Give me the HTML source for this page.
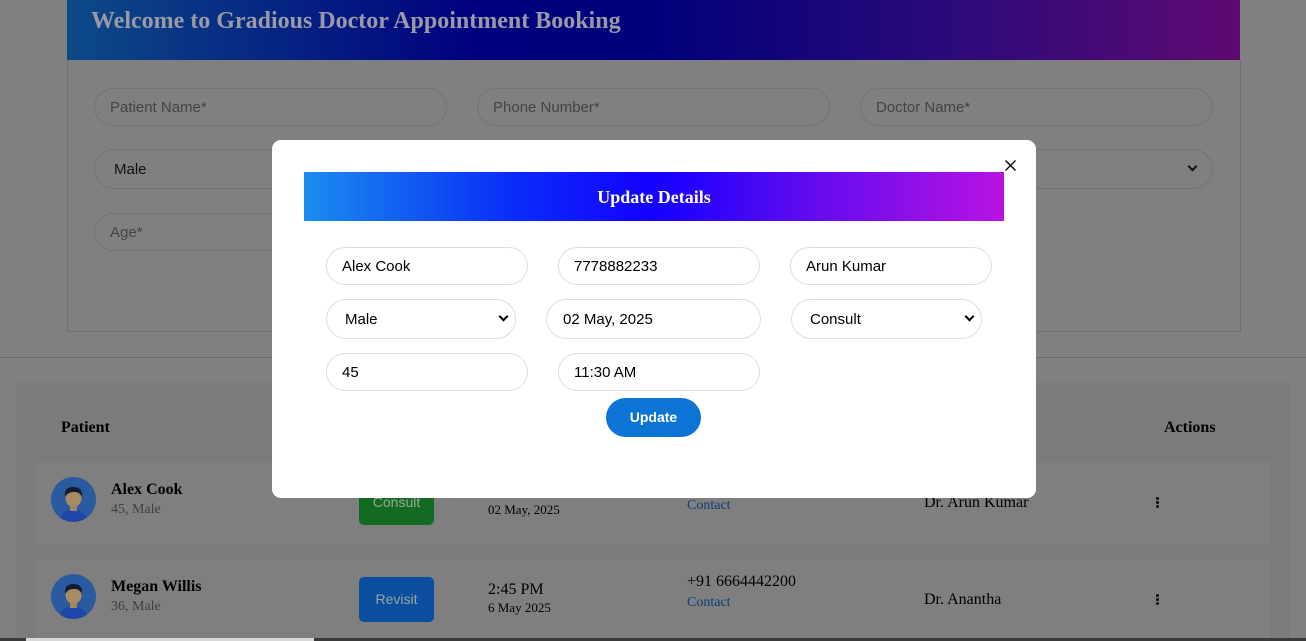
<!DOCTYPE html>
<html><head><meta charset="utf-8"><style>
*{box-sizing:border-box;margin:0;padding:0}
body{width:1306px;height:641px;overflow:hidden;background:#808080;position:relative;font-family:"Liberation Serif",serif}
.abs{position:absolute}
.hdr{left:67px;top:0;width:1173px;height:60px;background:linear-gradient(90deg,#0c4a86,#00007f 35%,#00007a 50%,#2a0a7a 75%,#5e0a72);}
.hdr h1{position:absolute;left:24px;top:8px;font-size:24px;color:#9a9aa6;font-weight:bold}
.form{left:67px;top:60px;width:1174px;height:272px;border:1px solid #707070;border-top:none}
.fi{position:absolute;height:38px;border:1px solid #737373;border-radius:20px;font:15px "Liberation Sans",sans-serif;color:#444;padding:10px 15px}
.line{left:0;top:357px;width:1306px;height:1px;background:#6a6a6a}
.tbl{left:16px;top:383px;width:1274px;height:258px;background:#7b7b7b}
.row{position:absolute;left:36px;width:1234px;height:82px;background:#7f7f7f}
.th{font-size:16px;font-weight:bold;color:#000}
.av{position:absolute;left:15px;width:45px;height:45px;border-radius:50%;background:#2a5aa0;overflow:hidden}
.nm{position:absolute;left:75px;font-size:16px;font-weight:bold;color:#000}
.sb{position:absolute;left:75px;font-size:14px;color:#404040}
.btn{position:absolute;left:323px;width:75px;height:45px;border-radius:5px;color:#9aa89a;font:14px "Liberation Sans",sans-serif;text-align:center;line-height:45px}
.t{position:absolute;color:#000}
.ct{color:#0c3e78;font-size:14px}
.dots{position:absolute;left:1120px;width:3px}
.dots i{display:block;width:3px;height:3px;background:#000;border-radius:50%;margin-bottom:1px}
.modal{left:272px;top:140px;width:764px;height:358px;background:#fff;border-radius:9px}
.mh{position:absolute;left:32px;top:32px;width:700px;height:49px;background:linear-gradient(90deg,#1a8ced,#0a2cf8 30%,#1400ff 50%,#6a0cee 75%,#b812e2);color:#fff;font-size:18px;font-weight:bold;text-align:center;line-height:50px}
.mi{position:absolute;height:38px;border:1px solid #ddd;border-radius:20px;font:15px "Liberation Sans",sans-serif;color:#000;padding:10px 15px}
.ms{height:40px;padding:11px 18px}
.chev{position:absolute;right:8px;top:13px;width:7px;height:7px;border-right:2px solid #000;border-bottom:2px solid #000;transform:rotate(45deg)}
.up{position:absolute;left:334px;top:258px;width:95px;height:39px;border-radius:20px;background:#0b74d4;color:#fff;font:bold 14px "Liberation Sans",sans-serif;text-align:center;line-height:39px}
.x{position:absolute;left:733px;top:20px}
</style></head><body>
<div class="abs hdr"><h1>Welcome to Gradious Doctor Appointment Booking</h1></div>
<div class="abs form"></div>
<div class="fi" style="left:94px;top:88px;width:353px">Patient Name*</div>
<div class="fi" style="left:477px;top:88px;width:353px">Phone Number*</div>
<div class="fi" style="left:860px;top:88px;width:353px">Doctor Name*</div>
<div class="fi" style="left:94px;top:149px;width:353px;height:40px;color:#111;padding-left:19px;padding-top:11px">Male</div>
<div class="fi" style="left:860px;top:149px;width:353px;height:40px"><span class="chev" style="right:16px;border-color:#111"></span></div>
<div class="fi" style="left:94px;top:213px;width:353px">Age*</div>
<div class="abs line"></div>
<div class="abs tbl"></div>
<div class="abs th" style="left:61px;top:419px">Patient</div>
<div class="abs th" style="left:1164px;top:419px">Actions</div>

<div class="row" style="top:462px">
 <div class="av" style="top:15px"><svg width="45" height="45"><path d="M8 45 Q10 33 22 32 Q35 33 37 45Z" fill="#1c47a8"/><rect x="19" y="27" width="7" height="7" fill="#a4855e"/><ellipse cx="22.5" cy="21" rx="8" ry="9" fill="#a88a63"/><path d="M14 20 Q13 10 22 10 Q32 10 31 20 Q28 14 22 15 Q17 15 14 20Z" fill="#141a30"/></svg></div>
 <div class="nm" style="top:19px">Alex Cook</div><div class="sb" style="top:40px">45, Male</div>
 <div class="btn" style="top:18px;background:#136a22">Consult</div>
 <div class="t" style="left:452px;top:22px;font-size:16px">11:30 AM</div>
 <div class="t" style="left:452px;top:40px;font-size:13px">02 May, 2025</div>
 <div class="t ct" style="left:651px;top:36px">Contact</div>
 <div class="t" style="left:888px;top:32px;font-size:16px">Dr. Arun Kumar</div>
 <div class="dots" style="top:35px"><i></i><i></i><i></i></div>
</div>
<div class="row" style="top:559px">
 <div class="av" style="top:15px"><svg width="45" height="45"><path d="M8 45 Q10 33 22 32 Q35 33 37 45Z" fill="#1c47a8"/><rect x="19" y="27" width="7" height="7" fill="#a4855e"/><ellipse cx="22.5" cy="21" rx="8" ry="9" fill="#a88a63"/><path d="M14 20 Q13 10 22 10 Q32 10 31 20 Q28 14 22 15 Q17 15 14 20Z" fill="#141a30"/></svg></div>
 <div class="nm" style="top:19px">Megan Willis</div><div class="sb" style="top:40px">36, Male</div>
 <div class="btn" style="top:18px;background:#0a4ea0">Revisit</div>
 <div class="t" style="left:452px;top:22px;font-size:16px">2:45 PM</div>
 <div class="t" style="left:452px;top:41px;font-size:13px">6 May 2025</div>
 <div class="t" style="left:651px;top:14px;font-size:16px">+91 6664442200</div>
 <div class="t ct" style="left:651px;top:36px">Contact</div>
 <div class="t" style="left:888px;top:32px;font-size:16px">Dr. Anantha</div>
 <div class="dots" style="top:35px"><i></i><i></i><i></i></div>
</div>
<div class="abs" style="left:0;top:638px;width:1306px;height:3px;background:#3a3a3a"></div>
<div class="abs" style="left:26px;top:638px;width:288px;height:3px;background:#d8d8d8"></div>

<div class="abs modal">
 <svg class="x" width="11" height="11"><path d="M0.5 0.5L10.5 10.5M10.5 0.5L0.5 10.5" stroke="#000" stroke-width="1.3"/></svg>
 <div class="mh">Update Details</div>
 <div class="mi" style="left:54px;top:107px;width:202px">Alex Cook</div>
 <div class="mi" style="left:286px;top:107px;width:202px">7778882233</div>
 <div class="mi" style="left:518px;top:107px;width:202px">Arun Kumar</div>
 <div class="mi ms" style="left:54px;top:159px;width:190px">Male<span class="chev"></span></div>
 <div class="mi ms" style="left:274px;top:159px;width:215px;padding-left:16px">02 May, 2025</div>
 <div class="mi ms" style="left:519px;top:159px;width:191px">Consult<span class="chev"></span></div>
 <div class="mi" style="left:54px;top:213px;width:202px">45</div>
 <div class="mi" style="left:286px;top:213px;width:202px">11:30 AM</div>
 <div class="up">Update</div>
</div>
</body></html>
